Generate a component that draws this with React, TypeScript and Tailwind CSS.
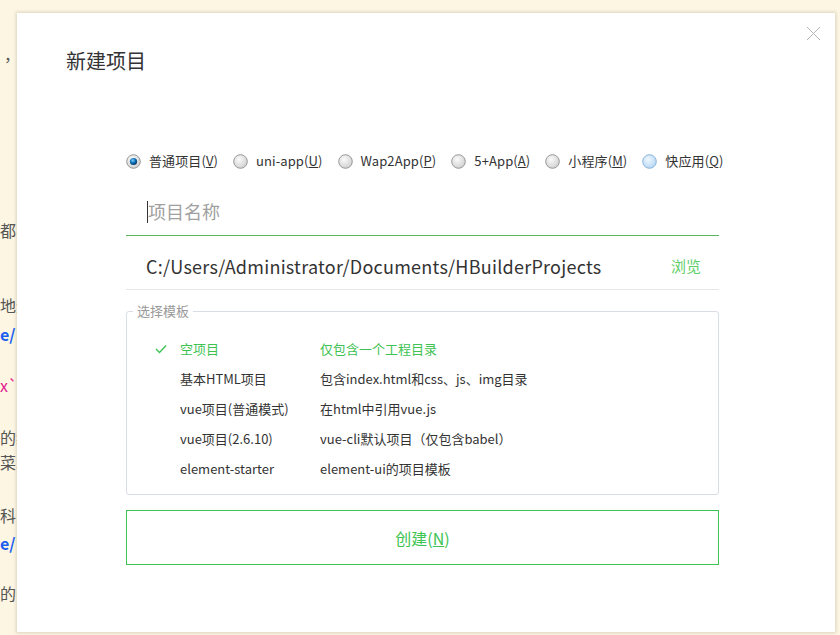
import React from 'react';

const font = { fontFamily: '"Noto Sans CJK SC", "Noto Sans", sans-serif' };

const radios = [
  { label: '普通项目', key: 'V', state: 'on' },
  { label: 'uni-app', key: 'U', state: 'off' },
  { label: 'Wap2App', key: 'P', state: 'off' },
  { label: '5+App', key: 'A', state: 'off' },
  { label: '小程序', key: 'M', state: 'off' },
  { label: '快应用', key: 'Q', state: 'hover' }
];

const templates = [
  { name: '空项目', desc: '仅包含一个工程目录', active: true },
  { name: '基本HTML项目', desc: '包含index.html和css、js、img目录' },
  { name: 'vue项目(普通模式)', desc: '在html中引用vue.js' },
  { name: 'vue项目(2.6.10)', desc: 'vue-cli默认项目（仅包含babel）' },
  { name: 'element-starter', desc: 'element-ui的项目模板' }
];

function Radio({ state, id }: { state: string; id: number }) {
  return (
    <svg width="15" height="15" viewBox="0 0 15 15" className="shrink-0">
      <defs>
        <radialGradient id={`rg${id}`} cx="40%" cy="35%" r="70%">
          <stop offset="0%" stopColor={state === 'hover' ? '#eef7ff' : '#fafafa'} />
          <stop offset="100%" stopColor={state === 'hover' ? '#b5d6f2' : '#cfcfcf'} />
        </radialGradient>
        <radialGradient id={`dot${id}`} cx="40%" cy="35%" r="65%">
          <stop offset="0%" stopColor="#7fd0ff" />
          <stop offset="55%" stopColor="#0a6fb8" />
          <stop offset="100%" stopColor="#08375e" />
        </radialGradient>
      </defs>
      <circle cx="7.5" cy="7.5" r="6.8" fill={`url(#rg${id})`} stroke={state === 'hover' ? '#7eaed6' : '#8f8f8f'} strokeWidth="0.9" />
      {state === 'on' && <circle cx="7.5" cy="7.5" r="3.6" fill={`url(#dot${id})`} />}
    </svg>
  );
}

// editor text showing behind the modal on the left
function Background() {
  return (
    <div className="flex flex-col text-[16px] leading-[20px] text-[#555]" style={font}>
      <div className="ml-[4px] mt-[44px]">，</div>
      <div className="mt-[156px] whitespace-nowrap">都不</div>
      <div className="mt-[55px] whitespace-nowrap">地无</div>
      <div className="mt-[9px] whitespace-nowrap font-bold text-[#1a5ff0]">e/</div>
      <div className="mt-[31px] whitespace-nowrap text-[#e0198f]">x`</div>
      <div className="mt-[32px] whitespace-nowrap">的编</div>
      <div className="mt-[5px] whitespace-nowrap">菜单</div>
      <div className="mt-[33px] whitespace-nowrap">科目</div>
      <div className="mt-[8px] whitespace-nowrap font-bold text-[#1a5ff0]">e/</div>
      <div className="mt-[30px] whitespace-nowrap">的公</div>
    </div>
  );
}

export default function App() {
  return (
    <div className="relative h-[635px] w-[840px] overflow-hidden bg-[#fdf6e3]" style={font}>
      <Background />
      <div className="absolute left-[17px] top-[13px] h-[619px] w-[818px] bg-white shadow-[0_0_3px_1px_rgba(120,110,90,0.25)]">
        <button className="absolute right-[14px] top-[13px] p-0">
          <svg width="15" height="15" viewBox="0 0 15 15">
            <path d="M1 1 L14 14 M14 1 L1 14" stroke="#b5b5b5" strokeWidth="1" fill="none" />
          </svg>
        </button>
        <h1 className="pl-[49px] pt-[34px] text-[20px] font-normal leading-[28px] text-[#333]">新建项目</h1>

        <div className="ml-[109px] w-[593px]">
          <div className="mt-[76px] flex h-[20px] items-center text-[13px] tracking-[0.1px] text-[#333]">
            {radios.map((r, i) => (
              <label key={r.key} className={`flex items-center gap-[8px] whitespace-nowrap ${i > 0 ? 'ml-[15px]' : ''}`}>
                <Radio state={r.state} id={i} />
                <span>
                  {r.label}(<span className="underline">{r.key}</span>)
                </span>
              </label>
            ))}
          </div>

          <div className="mt-[17px] flex h-[48px] items-center border-b border-[#5cb85c] pl-[21px]">
            <span className="h-[22px] w-px bg-[#333]" />
            <span className="text-[18px] text-[#a0a0a0]">项目名称</span>
          </div>

          <div className="flex h-[54px] items-center justify-between border-b border-[#e6e6e6] pl-[20px] pr-[18px] pt-[8px]">
            <span className="text-[18px] tracking-[0.25px] text-[#333]">C:/Users/Administrator/Documents/HBuilderProjects</span>
            <span className="text-[15px] text-[#5fcf6a]">浏览</span>
          </div>

          <fieldset className="mt-[13px] rounded-[3px] border border-[#d9dee5] pb-[10px] pt-[15px]">
            <legend className="ml-[6px] px-[4px] text-[13px] leading-[16px] text-[#999]">选择模板</legend>
            {templates.map((t) => (
              <div
                key={t.name}
                className={`flex h-[30px] items-center text-[13px] ${t.active ? 'text-[#3ec252]' : 'text-[#333]'}`}
              >
                <span className="flex w-[53px] justify-end pr-[13px]">
                  {t.active && (
                    <svg width="12" height="10" viewBox="0 0 12 10">
                      <path d="M1 5 L4.5 8.5 L11 1.5" stroke="#3ec252" strokeWidth="1.4" fill="none" />
                    </svg>
                  )}
                </span>
                <span className="w-[140px] whitespace-nowrap">{t.name}</span>
                <span className="whitespace-nowrap">{t.desc}</span>
              </div>
            ))}
          </fieldset>

          <button className="mt-[15px] flex h-[55px] w-full items-center justify-center border border-[#3ec452] text-[16px] text-[#3ec452]">
            创建(<span className="underline">N</span>)
          </button>
        </div>
      </div>
    </div>
  );
}
